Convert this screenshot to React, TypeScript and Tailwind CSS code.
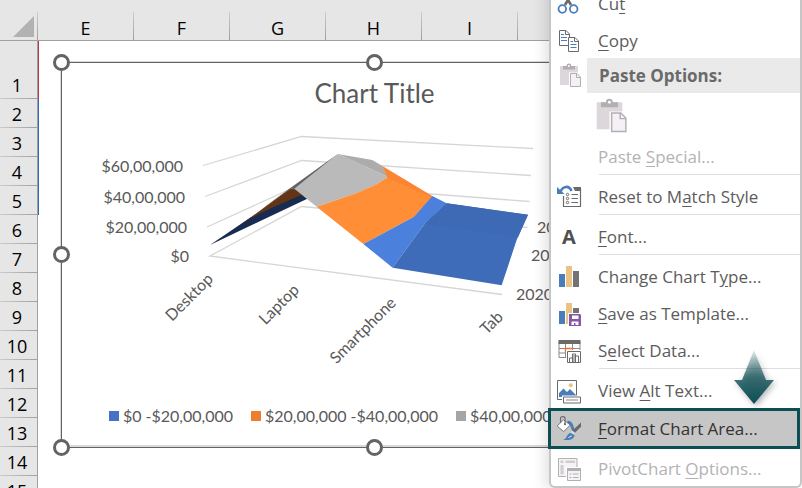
import React from 'react';

const columns = ['E', 'F', 'G', 'H', 'I', 'J', 'K', 'L'];
const rows = Array.from({ length: 16 }, (_, i) => i + 1);

const legend = [
    { label: '$0 -$20,00,000', color: 'bg-[#4472c4]' },
    { label: '$20,00,000 -$40,00,000', color: 'bg-[#ed7d31]' },
    { label: '$40,00,000 -$60,00,000', color: 'bg-[#a5a5a5]' },
];

const valueLabels = [
    { label: '$60,00,000', x: 183, y: 172 },
    { label: '$40,00,000', x: 185, y: 203 },
    { label: '$20,00,000', x: 187, y: 233 },
    { label: '$0', x: 189, y: 262 },
];

const productLabels = [
    { label: 'Desktop', x: 214, y: 280 },
    { label: 'Laptop', x: 300, y: 291 },
    { label: 'Smartphone', x: 397, y: 304 },
    { label: 'Tab', x: 504, y: 318 },
];

const yearLabels = [
    { label: '2022', x: 537, y: 233 },
    { label: '2021', x: 531, y: 261 },
    { label: '2020', x: 516, y: 300 },
];

const Icon: React.FC<{ children: React.ReactNode; className?: string }> = ({ children, className = 'size-[26px]' }) => (
    <svg viewBox="0 0 26 26" fill="none" className={`${className} shrink-0`} aria-hidden="true">
        {children}
    </svg>
);

const CutIcon = () => (
    <Icon>
        <path d="M8 2l7 12M16 2L9 14" stroke="#6a6a6a" strokeWidth="2.6" />
        <circle cx="6.3" cy="18" r="3.8" stroke="#4a7ebb" strokeWidth="1.8" />
        <circle cx="17.7" cy="18" r="3.8" stroke="#4a7ebb" strokeWidth="1.8" />
    </Icon>
);

const CopyIcon = () => (
    <Icon>
        <path d="M3.5 2.5h6.5l3.5 3.5v11.5h-10z" fill="#fff" stroke="#6a6a6a" />
        <path d="M9.5 2.5v4h4" stroke="#6a6a6a" />
        <path d="M5 6.5h3M5 9.5h6M5 12.5h6" stroke="#4a7ebb" />
        <path d="M12.5 9.5h6.5l3.5 3.5v10.5h-10z" fill="#fff" stroke="#6a6a6a" />
        <path d="M18.5 9.5v4h4" stroke="#6a6a6a" />
        <path d="M14.5 13.5h2.5M14.5 16.5h6M14.5 19.5h6" stroke="#4a7ebb" />
    </Icon>
);

const PasteIcon: React.FC<{ className?: string }> = ({ className }) => (
    <Icon className={className}>
        <rect x="4" y="3" width="18" height="19" rx="0.5" fill="#dbd7da" />
        <path d="M7 3h3.5a2.4 2.4 0 0 1 4.8 0H19v3.5H7z" fill="#b1afb1" />
        <circle cx="12.9" cy="3" r="1" fill="#fff" />
        <path d="M13 9.5h13V25H13z" fill="#fff" />
        <path d="M14.5 10.5h6.5l3.5 3.5v9.5h-10z" fill="#f5f0f7" stroke="#b1afb1" />
        <path d="M20.5 10.5v4h4" stroke="#b1afb1" />
    </Icon>
);

const ResetIcon = () => (
    <Icon>
        <path d="M7.5 12v10.5h17V5" stroke="#6a6a6a" strokeWidth="1.2" />
        <path d="M17 3h8v4h-6z" fill="#6a6a6a" />
        <path d="M15.5 10.5H22M15.5 14.5H22M15.5 18.5H22" stroke="#6a6a6a" />
        <circle cx="11.5" cy="10.5" r="1.2" stroke="#6a6a6a" />
        <circle cx="11.5" cy="14.5" r="1.2" stroke="#6a6a6a" />
        <circle cx="11.5" cy="18.5" r="1.2" stroke="#6a6a6a" />
        <path d="M4.5 7.5C7 2 13 1 15.5 7" stroke="#4a7ebb" strokeWidth="2.6" />
        <path d="M1 3v7h7.5z" fill="#4a7ebb" />
    </Icon>
);

const ChartTypeIcon = () => (
    <Icon>
        <path d="M3 10h6v13H3z" fill="#4a7ebb" />
        <path d="M10 2h6v21h-6z" fill="#eac282" />
        <path d="M17 7h6v16h-6z" fill="#737373" />
    </Icon>
);

const TemplateIcon = () => (
    <Icon>
        <path d="M3 10h6v13H3z" fill="#4a7ebb" />
        <path d="M10 2h6v21h-6z" fill="#eac282" />
        <path d="M17 7h6v6h-6z" fill="#737373" />
        <path d="M12 12h14v14H12z" fill="#fff" />
        <path d="M13 13h11l1 1v11H13z" fill="#8858a8" />
        <path d="M16 14.5h6.5V18H16zM15.5 20.5h7V24h-3v-2h-1.5v2h-2.5z" fill="#fff" />
    </Icon>
);

const SelectDataIcon = () => (
    <Icon>
        <path d="M3 4v15.5h21V4M9.5 6v13M16.5 6v13M3 10.5h21M3 15h21" stroke="#8a8a8a" />
        <path d="M2.5 2H24.5v4h-22z" fill="#6a6a6a" />
        <path d="M9.5 15v-4.5h8" stroke="#e8762c" strokeWidth="1.4" />
        <path d="M10 12h16v14H10z" fill="#fff" />
        <path d="M11.5 13.5h13v11h-13z" fill="#fff" stroke="#6a6a6a" />
        <path d="M13.5 24v-4h3v4M16.5 24v-8h3v8M19.5 24v-6h3v6" stroke="#6a6a6a" />
        <path d="M17 16.5h2V24h-2z" fill="#b5b5b5" />
    </Icon>
);

const AltTextIcon = () => (
    <Icon>
        <path d="M1.5 2.5h19v19h-19z" fill="#fff" stroke="#6a6a6a" />
        <circle cx="14.7" cy="7.2" r="2" fill="#eac282" />
        <path d="M3 19v-4l4.5-4.5L11 14l3-3 6 6v2z" fill="#4a7ebb" />
        <path d="M6 17.5h20V26H6z" fill="#fff" />
        <path d="M7.5 19h17v6h-17z" fill="#fff" stroke="#6a6a6a" />
        <path d="M10 22h12" stroke="#8a8a8a" />
    </Icon>
);

const FormatIcon = () => (
    <Icon>
        <path d="M11.5 6.2c5-.4 3.8 5 6 8" stroke="#4a7ebb" strokeWidth="3" />
        <path d="M1.2 10L7.5 3.8l6.8 5.2-6.6 6.500z" fill="#fff" stroke="#6a6a6a" strokeWidth="0.9" />
        <path d="M4.5 6.5V2c0-1.900 4.500-1.900 4.500 0v6" stroke="#6a6a6a" strokeWidth="1.1" />
        <circle cx="9" cy="8.2" r="1.1" fill="#6a6a6a" />
        <path d="M25 6.5v4.300l-6 6-2.600-2.300z" fill="#6a6a6a" />
        <path d="M15.6 15.500l2.800 2.600" stroke="#e6e6e6" strokeWidth="1.3" />
        <path d="M7 23.500c4 0 3-5.500 7.500-6.500l4 2c0 3-2.500 4.800-6 5-2 .1-4 .2-5.500-.5z" fill="#4a7ebb" />
        <path d="M12.500 21.500c1.400 0 1.600-1.500 3.200-1.500" stroke="#fff" />
    </Icon>
);

const PivotIcon = () => (
    <Icon>
        <path d="M2.5 2.5h18.5v18H2.5z" fill="#f6f3f6" stroke="#b1afb1" />
        <path d="M4.5 4.5h3v2.5h-3zM9.5 4.5h9.5v2.5H9.5zM4.5 9h3v9.5h-3z" fill="#d0cdd0" />
        <path d="M10 11h16v15H10z" fill="#fff" />
        <path d="M11.5 12.5h13v12h-13z" fill="#f6f3f6" stroke="#b1afb1" />
        <path d="M11 12h14v3H11z" fill="#b1afb1" />
        <path d="M13.5 18h2M17 18h5.5M13.5 21.5h2M17 21.5h5.5" stroke="#b1afb1" />
    </Icon>
);

interface MenuItemProps {
    icon?: React.ReactNode;
    children: React.ReactNode;
    disabled?: boolean;
    active?: boolean;
}

const MenuItem: React.FC<MenuItemProps> = ({ icon, children, disabled = false, active = false }) => {
    let style = 'h-[37px] w-full pt-0.5 text-[#5c5c5c]';
    if (disabled) style = 'h-[37px] w-full pt-0.5 text-[#b4b2b4]';
    if (active) style = 'h-[41px] -ml-[3px] w-[calc(100%+3px)] border-[3px] border-[#0b4f55] bg-[#c6c6c6] text-[#333333]';
    return (
        <button type="button" role="menuitem" disabled={disabled} className={`flex shrink-0 items-center text-left ${style}`}>
            <span className="flex w-9 shrink-0 justify-center">{icon}</span>
            <span className="pl-[11px] whitespace-nowrap underline-offset-3">{children}</span>
        </button>
    );
};

const Separator = () => (
    <div role="separator" className="ml-12 h-[3px] shrink-0 border-t border-[#dcdfe1]"></div>
);

const ContextMenu = () => (
    <div
        role="menu"
        className="absolute -top-4 right-0 flex w-[253px] flex-col rounded-b-md border-2 border-t-0 border-[#c6c6c6] bg-white font-['Open_Sans',sans-serif] text-[17px] leading-6 shadow-[-4px_2px_14px_rgba(0,0,0,0.12)]"
    >
        <MenuItem icon={<CutIcon />}>Cu<u>t</u></MenuItem>
        <MenuItem icon={<CopyIcon />}><u>C</u>opy</MenuItem>
        <div className="flex h-[35px] items-center">
            <span className="flex w-9 justify-center"><PasteIcon /></span>
            <span className="flex h-full flex-1 items-center bg-[#eaeaea] pl-3 font-bold text-[#6a6a6a]">Paste Options:</span>
        </div>
        <button type="button" aria-label="Paste" disabled className="flex h-11 items-center pt-0.5 pl-10">
            <PasteIcon className="size-[37px]" />
        </button>
        <MenuItem disabled>Paste <u>S</u>pecial...</MenuItem>
        <Separator />
        <MenuItem icon={<ResetIcon />}>Reset to M<u>a</u>tch Style</MenuItem>
        <Separator />
        <MenuItem icon={<span className="text-xl font-bold text-[#505050]">A</span>}><u>F</u>ont...</MenuItem>
        <Separator />
        <MenuItem icon={<ChartTypeIcon />}>Change Chart T<u>y</u>pe...</MenuItem>
        <MenuItem icon={<TemplateIcon />}><u>S</u>ave as Template...</MenuItem>
        <MenuItem icon={<SelectDataIcon />}>S<u>e</u>lect Data...</MenuItem>
        <Separator />
        <MenuItem icon={<AltTextIcon />}>View <u>A</u>lt Text...</MenuItem>
        <MenuItem icon={<FormatIcon />} active><u>F</u>ormat Chart Area...</MenuItem>
        <MenuItem icon={<PivotIcon />} disabled>PivotChart <u>O</u>ptions...</MenuItem>
    </div>
);

const SurfacePlot = () => (
    <svg viewBox="62 122 625 270" className="w-full" role="img" aria-label="Surface chart">
        <g fill="none" stroke="#d6d6d6" strokeWidth="1.3">
            <path d="M203 165.5L301.5 136.5L533 148.5" />
            <path d="M205 196.5L301.5 160.5L531 175.5" />
            <path d="M207 227L301.5 184L529.5 201.5" />
            <path d="M502 294.5L210 256L301.5 206.5L527.5 227.5" />
        </g>
        {/* surface bands, drawn back to front */}
        <g transform="translate(190 120) scale(0.33333)">
            <path d="M60 375L180 293L305 232L335 220L352 236Z" fill="#182b50" />
            <path d="M145 319L300 206L316 205L339 223L230 270L183 294Z" fill="#643414" />
            <path d="M215 267L298 206L443 102L360 172L313 209L306 205Z" fill="#636363" />
            <path d="M443 102L360 168L313 206L380 260L500 219L560 193L594 170Z" fill="#bababa" />
            <path d="M443 102L547 120L577 138L594 170Z" fill="#acacac" />
            <path d="M380 260L500 219L560 193L594 170L727 230L672 290L520 372Z" fill="#ff8e36" />
            <path d="M577 138L727 228L725 232L640 195L592 172Z" fill="#fb8532" />
            <path d="M520 372L672 290L727 228L770 250L705 310L608 443Z" fill="#4b80dc" />
            <path d="M608 443L705 310L770 250L1014 284L980 360L935 496Z" fill="#3f6cb9" />
            <path d="M705 310L770 250L1014 284L984 351Z" fill="#3d69b5" />
        </g>
        <g fill="#595959" className="font-[Lato,sans-serif] text-base">
            {valueLabels.map(({ label, x, y }) => (
                <text key={label} x={x} y={y} textAnchor="end">{label}</text>
            ))}
            {productLabels.map(({ label, x, y }) => (
                <text key={label} textAnchor="end" transform={`translate(${x} ${y}) rotate(-45)`}>{label}</text>
            ))}
            {yearLabels.map(({ label, x, y }) => (
                <text key={label} x={x} y={y}>{label}</text>
            ))}
        </g>
    </svg>
);

const handles = [
    '-top-[9px] -left-[9px]',
    '-top-[9px] left-[304px]',
    'top-[183px] -left-[9px]',
    '-bottom-[9px] -left-[9px]',
    '-bottom-[9px] left-[304px]',
];

const Chart = () => (
    <div className="absolute top-[62px] left-[61px] flex h-[386px] w-[627px] flex-col border border-[#636363] bg-white font-[Lato,sans-serif] text-[#595959] shadow-[0_-1px_0_#d9d9d9,-1px_0_0_#d9d9d9,inset_0_-2px_0_#d9d9d9]">
        <h1 className="pt-[14px] text-center text-[26px] leading-8">Chart Title</h1>
        <div className="h-[270px] pt-[13px]">
            <SurfacePlot />
        </div>
        <ul className="flex justify-center gap-[18px] pt-[25px] pl-[3px] text-base leading-6">
            {legend.map(({ label, color }) => (
                <li key={label} className="flex items-center gap-1 whitespace-nowrap">
                    <span className={`size-2.5 ${color}`}></span>
                    {label}
                </li>
            ))}
        </ul>
        {handles.map((position) => (
            <span key={position} className={`absolute size-[17px] rounded-full border-3 border-[#636363] bg-white ${position}`}></span>
        ))}
    </div>
);

const Sheet = () => (
    <table className="w-[806px] table-fixed border-separate border-spacing-0 font-['Open_Sans',sans-serif] text-lg leading-6 text-black">
        <thead>
            <tr className="h-[41px] bg-[#e6e6e6]">
                <th className="w-[38px] border-b border-[#a0a0a0] p-0">
                    <div className="flex h-10 items-end">
                        <button type="button" aria-label="Select all" className="flex flex-1 justify-end pr-[3px] pb-[3px]">
                            <svg viewBox="0 0 21 21" className="size-[21px]" aria-hidden="true">
                                <path d="M21 0v21H0z" fill="#b2b2b2" />
                            </svg>
                        </button>
                        <span className="h-7 w-px bg-linear-to-t from-[#a0a0a0] to-[#cccccc]"></span>
                    </div>
                </th>
                {columns.map((name) => (
                    <th key={name} scope="col" className="w-24 border-b border-[#a0a0a0] p-0 pt-3 font-normal">
                        <div className="flex h-7">
                            <span className="flex-1 pt-1">{name}</span>
                            <span className="w-px bg-linear-to-t from-[#a0a0a0] to-[#cccccc]"></span>
                        </div>
                    </th>
                ))}
            </tr>
        </thead>
        <tbody>
            {rows.map((row) => (
                <tr key={row} className={row === 1 ? 'h-[58px]' : 'h-[29px]'}>
                    <th scope="row" className="border-r border-[#a0a0a0] bg-[#e6e6e6] p-0 align-bottom font-normal">
                        <div className="pr-[3px] pb-px">{row}</div>
                        <div className="h-px bg-linear-to-r from-[#cccccc] to-[#a0a0a0]"></div>
                    </th>
                    {row === 1 && <td colSpan={8} className="border-l border-[#c0343f] p-0"></td>}
                    {row > 1 && row < 6 && <td colSpan={8} className="border-l border-[#2f69c0] p-0"></td>}
                    {row > 5 && <td colSpan={8} className="p-0"></td>}
                </tr>
            ))}
        </tbody>
    </table>
);

const App: React.FC = () => {
    return (
        <main className="relative h-screen overflow-hidden bg-white">
            <Sheet />
            <Chart />
            <ContextMenu />
            <svg viewBox="0 0 52 66" className="pointer-events-none absolute top-[346px] right-[22px] w-[52px]" aria-hidden="true">
                <defs>
                    <linearGradient id="pointer" x1="0" y1="0" x2="0" y2="1">
                        <stop offset="0" stopColor="#0b4f55" stopOpacity="0.1" />
                        <stop offset="0.5" stopColor="#0b4f55" stopOpacity="0.75" />
                        <stop offset="1" stopColor="#0b4f55" />
                    </linearGradient>
                </defs>
                <path d="M26 4L38 34H46L26 58L6 34H14Z" fill="url(#pointer)" className="drop-shadow-[2px_2px_3px_rgba(0,0,0,0.35)]" />
            </svg>
        </main>
    );
};

export default App;
